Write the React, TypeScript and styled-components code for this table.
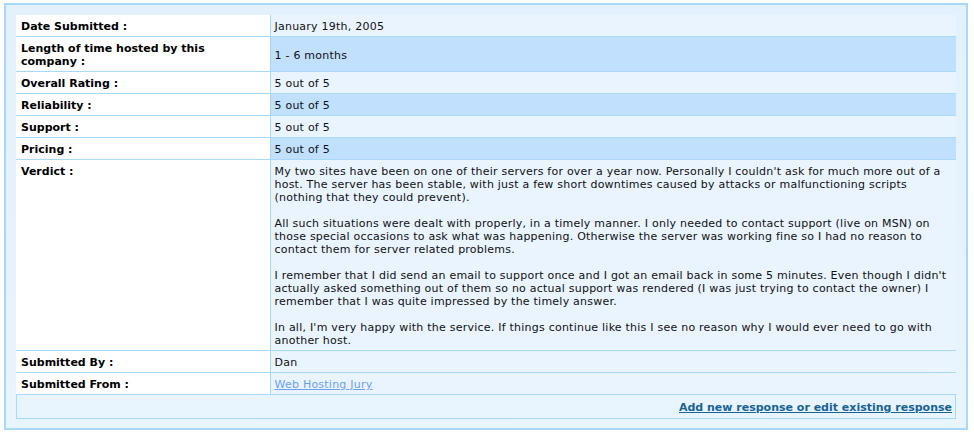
import styled, { createGlobalStyle } from "styled-components";

const GlobalStyle = createGlobalStyle`
  body {
    margin: 0;
    background: #ffffff;
    font-family: "DejaVu Sans", Verdana, sans-serif;
  }
`;

const rows = [
  { label: "Date Submitted :", value: "January 19th, 2005" },
  { label: "Length of time hosted by this company :", value: "1 - 6 months" },
  { label: "Overall Rating :", value: "5 out of 5" },
  { label: "Reliability :", value: "5 out of 5" },
  { label: "Support :", value: "5 out of 5" },
  { label: "Pricing :", value: "5 out of 5" },
];

function Review() {
  return (
    <Panel>
      <GlobalStyle />
      <Table>
        <tbody>
          {rows.map((row, i) => (
            <tr key={row.label}>
              <Label>{row.label}</Label>
              <Value $alt={i % 2 === 1}>{row.value}</Value>
            </tr>
          ))}
          <tr>
            <Label>Verdict :</Label>
            <Value>
              <Para>
                My two sites have been on one of their servers for over a year now. Personally I
                couldn't ask for much more out of a host. The server has been stable, with just a
                few short downtimes caused by attacks or malfunctioning scripts (nothing that they
                could prevent).
              </Para>
              <Para>
                All such situations were dealt with properly, in a timely manner. I only needed to
                contact support (live on MSN) on those special occasions to ask what was happening.
                Otherwise the server was working fine so I had no reason to contact them for server
                related problems.
              </Para>
              <Para>
                I remember that I did send an email to support once and I got an email back in some
                5 minutes. Even though I didn't actually asked something out of them so no actual
                support was rendered (I was just trying to contact the owner) I remember that I was
                quite impressed by the timely answer.
              </Para>
              <Para>
                In all, I'm very happy with the service. If things continue like this I see no
                reason why I would ever need to go with another host.
              </Para>
            </Value>
          </tr>
          <tr>
            <Label>Submitted By :</Label>
            <Value>Dan</Value>
          </tr>
          <tr>
            <Label $last>Submitted From :</Label>
            <Value $last>
              <SourceLink href="#">Web Hosting Jury</SourceLink>
            </Value>
          </tr>
        </tbody>
      </Table>
      <Footer>
        <ActionLink href="#">Add new response or edit existing response</ActionLink>
      </Footer>
    </Panel>
  );
}

export default function App() {
  return <Review />;
}

const Panel = styled.div`
  margin: 3px 0 0 4px;
  width: 964px;
  box-sizing: border-box;
  border: 2px solid #a9d9f9;
  background: linear-gradient(180deg, #e3f1fe 0%, #e8f4fe 100%);
  padding: 10px 10px 9px 10px;
  font-size: 11px;
  line-height: 13px;
  color: #111111;
`;

const Table = styled.table`
  width: 940px;
  border-collapse: collapse;
  border-spacing: 0;
  table-layout: fixed;
`;

const Label = styled.td<{ $last?: boolean }>`
  width: 254px;
  box-sizing: border-box;
  padding: 5px 14px 3px 5px;
  background: #ffffff;
  font-weight: bold;
  vertical-align: top;
  color: #000000;
  border-bottom: ${(p) => (p.$last ? "none" : "1px solid #a9d9f9")};
  border-right: 1px solid #a9d9f9;
`;

const Value = styled.td<{ $alt?: boolean; $last?: boolean }>`
  padding: 5px 4px 3px 4px;
  letter-spacing: 0.23px;
  background: ${(p) => (p.$alt ? "#c0e0fd" : "#e9f4fe")};
  vertical-align: middle;
  border-bottom: ${(p) => (p.$last ? "none" : "1px solid #a9d9f9")};
`;

const Para = styled.p`
  margin: 0 0 13px 0;
  &:last-child {
    margin-bottom: 0;
  }
`;

const SourceLink = styled.a`
  color: #6c9ff2;
  text-decoration: underline;
`;

const Footer = styled.div`
  display: flex;
  justify-content: flex-end;
  align-items: flex-end;
  height: 25px;
  box-sizing: border-box;
  border: 1px solid #a9d9f9;
  padding: 0 3px 4px 0;
`;

const ActionLink = styled.a`
  font-weight: bold;
  color: #176394;
  text-decoration: underline;
`;
